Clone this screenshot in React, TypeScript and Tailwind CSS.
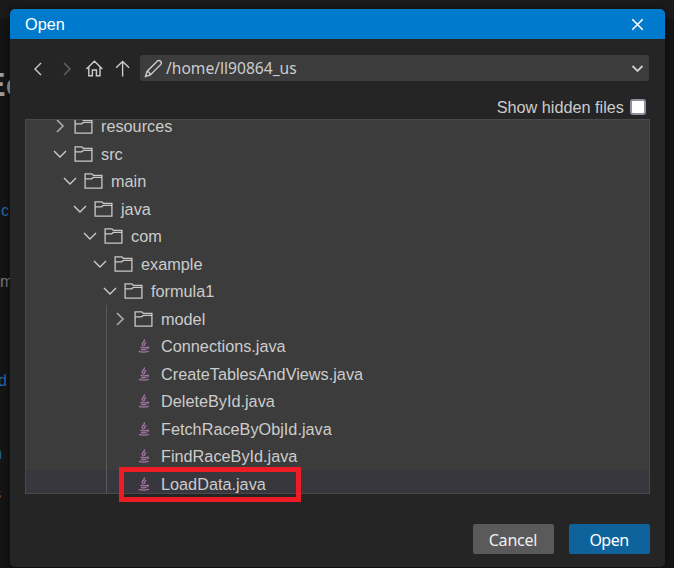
import React from "react";

type Entry = { name: string; depth: number; kind: "open" | "closed" | "file" };

const entries: Entry[] = [
  { name: "resources", depth: 0, kind: "closed" },
  { name: "src", depth: 0, kind: "open" },
  { name: "main", depth: 1, kind: "open" },
  { name: "java", depth: 2, kind: "open" },
  { name: "com", depth: 3, kind: "open" },
  { name: "example", depth: 4, kind: "open" },
  { name: "formula1", depth: 5, kind: "open" },
  { name: "model", depth: 6, kind: "closed" },
  { name: "Connections.java", depth: 6, kind: "file" },
  { name: "CreateTablesAndViews.java", depth: 6, kind: "file" },
  { name: "DeleteById.java", depth: 6, kind: "file" },
  { name: "FetchRaceByObjId.java", depth: 6, kind: "file" },
  { name: "FindRaceById.java", depth: 6, kind: "file" },
  { name: "LoadData.java", depth: 6, kind: "file" },
];

function Stroke({ d, w, h, className = "", sw = 1.4 }: { d: string; w: number; h: number; className?: string; sw?: number }) {
  return (
    <svg width={w} height={h} viewBox={`0 0 ${w} ${h}`} fill="none" stroke="currentColor" strokeWidth={sw} className={`shrink-0 ${className}`}>
      <path d={d} />
    </svg>
  );
}

function Folder() {
  return <Stroke w={20} h={18} sw={1.3} className="-ml-px text-[#c8c8c8]" d="M2.1 16.2V1.8H8.8L10.3 3.3H18.9V16.2ZM2.1 6.8H8.6L10.3 5.4H18.9" />;
}

function JavaCup() {
  return (
    <Stroke
      w={12}
      h={14}
      sw={1.4}
      className="ml-[4px] text-[#a074a0]"
      d="M6 .5Q7 2 5 3.6Q3.2 5 5.6 7.4M8.2 3.4Q5.6 4.8 6.9 6.8M2.4 8.2Q5.5 9.4 9 8.3M9 8.2Q11.6 7.9 9.6 10M3 10.3Q5.8 11.3 8.6 10.4M.8 12.4Q5.5 13.8 10.8 12.3"
    />
  );
}

function Row({ entry }: { entry: Entry }) {
  const selected = entry.name === "LoadData.java";
  return (
    <div className={`flex h-[27.5px] shrink-0 items-center ${selected ? "bg-[#37373d]" : ""}`} style={{ paddingLeft: 27 + entry.depth * 10 }}>
      <span className="flex w-[21px] shrink-0">
        {entry.kind === "open" && <Stroke w={14} h={14} d="M1 4L7 10L13 4" />}
        {entry.kind === "closed" && <Stroke w={14} h={14} sw={1.7} d="M4 1L10 7L4 13" className="text-[#a9a9a9]" />}
      </span>
      <span className="flex w-[27px] shrink-0">{entry.kind === "file" ? <JavaCup /> : <Folder />}</span>
      <span className="whitespace-nowrap leading-[20px]">{entry.name}</span>
    </div>
  );
}

export default function App() {
  return (
    <div className="relative h-[568px] w-[674px] overflow-hidden bg-[#151515] pt-[9px] pl-[10px] font-['Liberation_Sans',sans-serif] text-[16.25px] text-[#cccccc]">
      <div className="absolute top-0 left-0 h-[19px] w-full bg-[#1b1b1b]" />
      <div className="absolute top-[59px] left-[-17px] text-[34px] font-bold text-[#a0a0a0]">Ec</div>
      <div className="absolute top-[199px] left-[1px] text-[16px] text-[#2468b0]">c</div>
      <div className="absolute top-[270px] left-0 text-[16px] text-[#757575]">m</div>
      <div className="absolute top-[369px] left-[-2px] text-[16px] text-[#2468b0]">d</div>
      <div className="absolute top-[442px] left-[-7px] text-[16px] text-[#2270c4]">n</div>
      <div className="absolute top-[482px] left-[-7px] text-[16px] text-[#808080]">s</div>

      <div className="relative flex h-[558px] w-[655px] flex-col rounded-[5px] bg-[#252526] shadow-[0_0_8px_1px_rgba(0,0,0,0.45)]">
        <header className="flex h-[30px] shrink-0 items-center justify-between rounded-t-[5px] bg-[#007acc] pr-[21px] pl-[15px] text-white">
          <span>Open</span>
          <Stroke w={13} h={13} sw={1.6} d="M1.3 1.3L11.7 11.7M11.7 1.3L1.3 11.7" />
        </header>
        <div className="mt-4 flex h-[26px] shrink-0 items-center pr-4 pl-[21px]">
          <Stroke w={14} h={14} className="mt-px" d="M10 1L4 7L10 13" />
          <Stroke w={14} h={14} className="mt-px ml-[15px] text-[#656565]" d="M4 1L10 7L4 13" />
          <Stroke w={18} h={18} className="ml-[11px]" d="M1.4 9.9L9.4 2.2L17.4 9.9M3.8 7.8V16.7H7.4V11H11.4V16.7H15V7.8" />
          <Stroke w={16} h={18} className="ml-[12px]" d="M7.6 17.4V2.4M1.1 8.8L7.6 2.4L14.1 8.8" />
          <div className="ml-[9px] flex h-[26px] flex-1 items-center rounded-[3px] bg-[#3c3c3c] pr-[5px] pl-[4px]">
            <Stroke w={19} h={19} sw={1.4} d="M1.5 17.5L3 12.4L13.4 2Q15 .8 16.6 2.2Q18 3.8 16.8 5.4L6.4 15.9ZM3 12.4Q5.6 12.8 6.4 15.9" />
            <span className="ml-[3px] flex-1 pt-px font-['Noto_Sans',sans-serif] text-[15.6px]">/home/ll90864_us</span>
            <Stroke w={13} h={10} sw={1.9} className="mt-px" d="M1.5 2L6.5 7L11.5 2" />
          </div>
        </div>
        <div className="mt-4 flex h-[19px] shrink-0 items-center justify-end gap-[6px] pr-[19px]">
          <span className="pt-px">Show hidden files</span>
          <span className="h-4 w-4 rounded-[3px] border-2 border-[#8f8f9d] bg-white" />
        </div>
        <div className="relative mt-[3px] ml-[15px] flex h-[375px] w-[625px] shrink-0 flex-col justify-start overflow-hidden border border-[#4a4a4c] bg-[#3c3c3c]">
          <div className="-mt-[7.5px] flex flex-col">
            {entries.map((e) => <Row key={e.name} entry={e} />)}
          </div>
          <div className="absolute top-[185px] bottom-0 left-[80px] w-px bg-[#5a5a5a]" />
        </div>
        <footer className="mt-[30px] mr-[15px] flex justify-end gap-[15px] font-['Noto_Sans',sans-serif] text-[16px]">
          <button className="h-[30px] w-[81px] rounded-[2px] bg-[#5a5a5a] pt-px pr-px tracking-[-0.2px] text-[#eeeeee]">Cancel</button>
          <button className="h-[30px] w-[81px] rounded-[2px] bg-[#0e639c] pt-px pr-px tracking-[-0.5px] text-white">Open</button>
        </footer>
      </div>
      <div className="absolute top-[467px] left-[119px] h-[35px] w-[182px] border-[5px] border-[#ed1c24]" />
    </div>
  );
}
